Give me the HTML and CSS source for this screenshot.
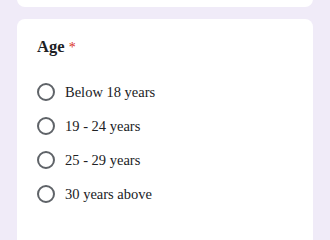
FILE: index.html
```html
<!DOCTYPE html>
<html lang="en">
<head>
<meta charset="utf-8">
<title>Age</title>
<link rel="stylesheet" href="styles.css">
</head>
<body>
<div class="page">
  <div class="card card-prev"></div>
  <div class="card question">
    <div class="title">Age <span class="req">*</span></div>
    <div class="options">
      <label class="option"><span class="radio"></span><span class="label">Below 18 years</span></label>
      <label class="option"><span class="radio"></span><span class="label">19 - 24 years</span></label>
      <label class="option"><span class="radio"></span><span class="label">25 - 29 years</span></label>
      <label class="option"><span class="radio"></span><span class="label">30 years above</span></label>
    </div>
  </div>
</div>
</body>
</html>
```
FILE: styles.css
```css
html, body {
  margin: 0;
  padding: 0;
  background: #f0ebf8;
}
body {
  font-family: "Liberation Serif", "DejaVu Serif", serif;
  color: #202124;
}
.page {
  display: flex;
  flex-direction: column;
  gap: 12px;
  padding: 0 17px;
}
.card {
  background: #ffffff;
  border-radius: 8px;
  flex: none;
}
.card-prev {
  height: 40px;
  margin-top: -33px;
}
.question {
  box-sizing: border-box;
  padding: 16px 20px 0;
  height: calc(100vh - 19px);
  border-radius: 8px 8px 0 0;
}
.title {
  font-size: 16.5px;
  line-height: 24px;
  font-weight: 700;
  color: #202124;
}
.req {
  color: #d93025;
  font-weight: 400;
  font-size: 14px;
}
.options {
  margin-top: 15px;
  display: flex;
  flex-direction: column;
}
.option {
  display: flex;
  align-items: center;
  height: 34px;
  gap: 10px;
}
.radio {
  width: 18px;
  height: 18px;
  box-sizing: border-box;
  border: 2px solid #5f6368;
  border-radius: 50%;
  flex: none;
}
.label {
  font-size: 14.5px;
  color: #202124;
}
```
